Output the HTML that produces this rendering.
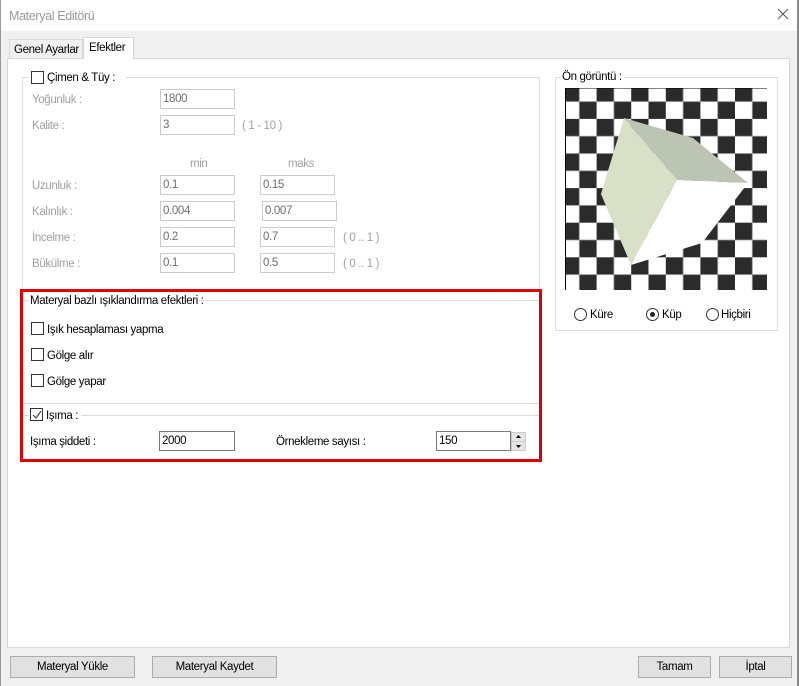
<!DOCTYPE html>
<html><head><meta charset="utf-8"><style>
*{margin:0;padding:0;box-sizing:border-box}
body{width:799px;height:686px;background:#f0f0f0;font-family:"Liberation Sans",sans-serif;font-size:11.5px;color:#000;position:relative;overflow:hidden}
.a{position:absolute}
.t{position:absolute;white-space:nowrap;letter-spacing:-0.35px;margin-top:1px}
.g{color:#a0a0a0}
.in{position:absolute;height:20px;border:1px solid #ccc;background:#fff;color:#6d6d6d;padding:3px 0 0 2px;font-size:11.5px;letter-spacing:-0.35px}
.in.e{border-color:#7a7a7a;color:#000}
.cb{position:absolute;width:13px;height:13px;border:1px solid #333;background:#fff}
.btn{position:absolute;height:22px;border:1px solid #adadad;background:#e1e1e1;text-align:center;line-height:21px;letter-spacing:-0.35px}
.rd{position:absolute;width:13px;height:13px;border:1px solid #333;border-radius:50%;background:#fff}
</style></head><body>
<div class="a" style="left:0;top:0;width:799px;height:31px;background:#fff"></div>
<div class="t" style="left:9px;top:8px;font-size:12.5px;color:#999">Materyal Editörü</div>
<svg class="a" style="left:777px;top:8px" width="12" height="12"><path d="M1 1L11 11M11 1L1 11" stroke="#555" stroke-width="1"/></svg>
<div class="a" style="left:797px;top:0;width:2px;height:686px;background:#888"></div>
<div class="a" style="left:0;top:0;width:1px;height:686px;background:#999"></div>
<!-- tabs -->
<div class="a" style="left:9px;top:39px;width:74px;height:20px;border:1px solid #d9d9d9;border-bottom:none;background:#f0f0f0"></div>
<div class="t" style="left:14px;top:43px">Genel Ayarlar</div>
<div class="a" style="left:83px;top:37px;width:51px;height:22px;border:1px solid #d9d9d9;border-bottom:none;background:#fff;z-index:2"></div>
<div class="t" style="left:89px;top:41px;z-index:3">Efektler</div>
<div class="a" style="left:7px;top:58px;width:783px;height:590px;border:1px solid #d9d9d9;background:#fff"></div>
<!-- grass group -->
<div class="a" style="left:22px;top:77px;width:518px;height:210px;border:1px solid #dcdcdc;border-bottom:none"></div>
<div class="a" style="left:29px;top:70px;width:97px;height:14px;background:#fff"></div>
<div class="cb" style="left:31px;top:71px"></div>
<div class="t" style="left:47px;top:71px">Çimen &amp; Tüy :</div>
<div class="t g" style="left:32px;top:93px">Yoğunluk :</div>
<div class="in" style="left:160px;top:89px;width:75px">1800</div>
<div class="t g" style="left:32px;top:119px">Kalite :</div>
<div class="in" style="left:160px;top:115px;width:75px">3</div>
<div class="t g" style="left:242px;top:119px">( 1 - 10 )</div>
<div class="t g" style="left:190px;top:157px">min</div>
<div class="t g" style="left:288px;top:157px">maks</div>
<div class="t g" style="left:32px;top:179px">Uzunluk :</div>
<div class="in" style="left:160px;top:175px;width:75px">0.1</div>
<div class="in" style="left:260px;top:175px;width:75px">0.15</div>
<div class="t g" style="left:32px;top:205px">Kalınlık :</div>
<div class="in" style="left:160px;top:201px;width:75px">0.004</div>
<div class="in" style="left:262px;top:201px;width:75px">0.007</div>
<div class="t g" style="left:32px;top:231px">İncelme :</div>
<div class="in" style="left:160px;top:227px;width:75px">0.2</div>
<div class="in" style="left:260px;top:227px;width:75px">0.7</div>
<div class="t g" style="left:343px;top:231px">( 0 .. 1 )</div>
<div class="t g" style="left:32px;top:257px">Bükülme :</div>
<div class="in" style="left:160px;top:253px;width:75px">0.1</div>
<div class="in" style="left:260px;top:253px;width:75px">0.5</div>
<div class="t g" style="left:343px;top:257px">( 0 .. 1 )</div>
<!-- red box -->
<div class="a" style="left:20px;top:289px;width:522px;height:173px;border:3px solid #e00000"></div>
<div class="a" style="left:23px;top:300px;width:516px;height:1px;background:#dcdcdc"></div>
<div class="a" style="left:29px;top:293px;width:170px;height:14px;background:#fff"></div>
<div class="t" style="left:30px;top:294px">Materyal bazlı ışıklandırma efektleri :</div>
<div class="cb" style="left:31px;top:322px"></div><div class="t" style="left:47px;top:323px">Işık hesaplaması yapma</div>
<div class="cb" style="left:31px;top:348px"></div><div class="t" style="left:47px;top:349px">Gölge alır</div>
<div class="cb" style="left:31px;top:374px"></div><div class="t" style="left:47px;top:375px">Gölge yapar</div>
<div class="a" style="left:23px;top:403px;width:516px;height:1px;background:#dcdcdc"></div>
<div class="a" style="left:23px;top:415px;width:516px;height:1px;background:#dcdcdc"></div>
<div class="a" style="left:29px;top:408px;width:52px;height:14px;background:#fff"></div>
<div class="cb" style="left:30px;top:408px"></div>
<svg class="a" style="left:31px;top:409px" width="12" height="12"><path d="M2 6L5 9L10 2" stroke="#444" fill="none" stroke-width="1.2"/></svg>
<div class="t" style="left:46px;top:409px">Işıma :</div>
<div class="t" style="left:30px;top:435px">Işıma şiddeti :</div>
<div class="in e" style="left:159px;top:431px;width:76px">2000</div>
<div class="t" style="left:276px;top:435px">Örnekleme sayısı :</div>
<div class="in e" style="left:436px;top:431px;width:75px">150</div>
<div class="a" style="left:511px;top:432px;width:15px;height:10px;background:#e5e5e5;border:1px solid #ccc"></div>
<div class="a" style="left:511px;top:441px;width:15px;height:10px;background:#e5e5e5;border:1px solid #ccc"></div>
<svg class="a" style="left:511px;top:432px" width="15" height="19"><path d="M5 6L7.5 3L10 6Z M5 13L7.5 16L10 13Z" fill="#000"/></svg>
<!-- preview -->
<div class="a" style="left:555px;top:77px;width:223px;height:254px;border:1px solid #dcdcdc"></div>
<div class="a" style="left:561px;top:70px;width:63px;height:14px;background:#fff"></div>
<div class="t" style="left:562px;top:70px">Ön görüntü :</div>
<svg class="a" style="left:565px;top:88px" width="202" height="202">
<defs><pattern id="p" x="-3" y="-3.7" width="34.6" height="34.6" patternUnits="userSpaceOnUse">
<rect width="34.6" height="34.6" fill="#fff"/>
<rect x="0" y="0" width="17.3" height="17.3" fill="#2b2b2b"/>
<rect x="17.3" y="17.3" width="17.3" height="17.3" fill="#2b2b2b"/>
<path d="M17.3 0V34.6M0 17.3H34.6" stroke="#999" stroke-width="0.8"/>
</pattern></defs>
<rect width="202" height="202" fill="url(#p)"/>
<path d="M0 0V202" stroke="#000" stroke-width="2"/>
<path d="M0 0H202" stroke="#000" stroke-width="1"/>
<g transform="translate(-565,-88)">
<polygon points="624,118 677,180 631,265 601,194" fill="#d9e0c8"/>
<polygon points="624,118 693,138 748,183 677,180" fill="#bcc5b4"/>
<polygon points="677,180 748,183 702,243 631,265" fill="#fff"/>
</g>
</svg>
<div class="rd" style="left:574px;top:308px"></div><div class="t" style="left:590px;top:308px">Küre</div>
<div class="rd" style="left:646px;top:308px"></div><div class="a" style="left:650px;top:312px;width:5px;height:5px;border-radius:50%;background:#222"></div><div class="t" style="left:662px;top:308px">Küp</div>
<div class="rd" style="left:706px;top:308px"></div><div class="t" style="left:721px;top:308px">Hiçbiri</div>
<!-- buttons -->
<div class="btn" style="left:10px;top:656px;width:125px">Materyal Yükle</div>
<div class="btn" style="left:152px;top:656px;width:125px">Materyal Kaydet</div>
<div class="btn" style="left:638px;top:656px;width:73px">Tamam</div>
<div class="btn" style="left:719px;top:656px;width:73px">İptal</div>
</body></html>
